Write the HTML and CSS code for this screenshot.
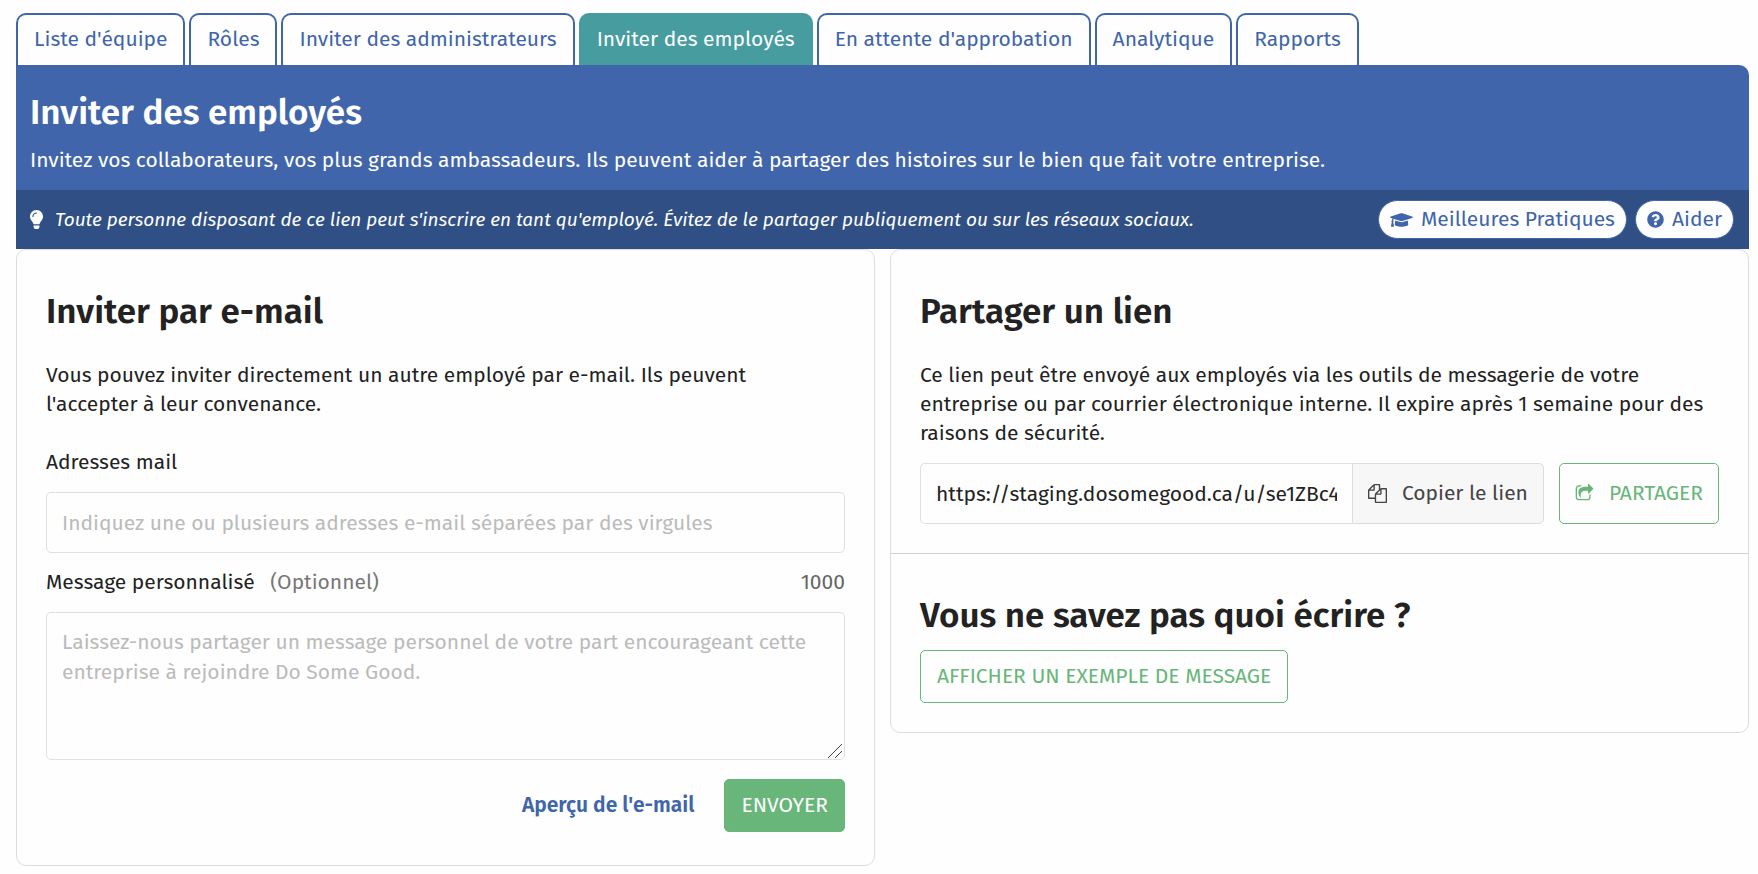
FILE: index.html
```html
<!DOCTYPE html>
<html lang="fr">
<head>
  <meta charset="UTF-8">
  <meta name="viewport" content="width=device-width, initial-scale=1">
  <title>Inviter des employés</title>
  <link rel="stylesheet" href="styles.css">
</head>
<body>

  <nav class="tabs">
    <a class="tab" href="#liste">Liste d'équipe</a>
    <a class="tab" href="#roles">Rôles</a>
    <a class="tab" href="#administrateurs">Inviter des administrateurs</a>
    <a class="tab is-active" href="#employes" aria-current="page">Inviter des employés</a>
    <a class="tab" href="#approbation">En attente d'approbation</a>
    <a class="tab" href="#analytique">Analytique</a>
    <a class="tab" href="#rapports">Rapports</a>
  </nav>

  <header class="page-header">
    <h1>Inviter des employés</h1>
    <p>Invitez vos collaborateurs, vos plus grands ambassadeurs. Ils peuvent aider à partager des histoires sur le bien que fait votre entreprise.</p>
  </header>

  <div class="tip-bar">
    <svg class="icon-bulb" viewBox="0 0 352 512" aria-hidden="true"><path d="M96.06 454.35c.01 6.29 1.87 12.45 5.36 17.69l17.09 25.69a31.99 31.99 0 0 0 26.64 14.28h61.71a31.99 31.99 0 0 0 26.64-14.28l17.09-25.69a31.989 31.989 0 0 0 5.36-17.69l.04-38.35H96.01l.05 38.35zM0 176c0 44.37 16.45 84.85 43.56 115.78 16.52 18.85 42.36 58.23 52.21 91.45.04.26.07.52.11.78h160.24c.04-.26.07-.51.11-.78 9.85-33.22 35.69-72.6 52.21-91.45C335.55 260.85 352 220.37 352 176 352 78.61 272.91-.3 175.45 0 73.44.31 0 82.97 0 176zm176-80c-44.11 0-80 35.89-80 80 0 8.84-7.16 16-16 16s-16-7.16-16-16c0-61.76 50.24-112 112-112 8.84 0 16 7.16 16 16s-7.16 16-16 16z"/></svg>
    <p class="tip">Toute personne disposant de ce lien peut s'inscrire en tant qu'employé. Évitez de le partager publiquement ou sur les réseaux sociaux.</p>
    <a class="pill" href="#pratiques">
      <svg class="icon-cap" viewBox="0 0 640 512" aria-hidden="true"><path d="M622.34 153.2L343.4 67.5c-15.2-4.67-31.6-4.67-46.79 0L17.66 153.2c-23.54 7.23-23.54 38.36 0 45.59l48.63 14.94c-10.67 13.19-17.23 29.28-17.88 46.9C38.78 266.15 32 276.11 32 288c0 10.78 5.68 19.85 13.86 25.65L20.33 428.53C18.11 438.52 25.71 448 35.94 448h56.11c10.24 0 17.84-9.48 15.62-19.47L82.14 313.65C90.32 307.85 96 298.78 96 288c0-11.57-6.47-21.25-15.66-26.87.76-15.02 8.44-28.3 20.69-36.72L296.6 284.5c9.06 2.78 26.44 6.25 46.79 0l278.95-85.7c23.55-7.24 23.55-38.36 0-45.6zM352.79 315.09c-28.53 8.76-52.84 3.92-65.59 0l-145.02-44.55L128 384c0 35.35 85.96 64 192 64s192-28.65 192-64l-14.18-113.47-145.03 44.56z"/></svg>
      Meilleures Pratiques
    </a>
    <a class="pill" href="#aide">
      <svg class="icon-help" viewBox="0 0 512 512" aria-hidden="true"><path d="M504 256c0 136.997-111.043 248-248 248S8 392.997 8 256C8 119.083 119.043 8 256 8s248 111.083 248 248zM262.655 90c-54.497 0-89.255 22.957-116.549 63.758-3.536 5.286-2.353 12.415 2.715 16.258l34.699 26.31c5.205 3.947 12.621 3.008 16.665-2.122 17.864-22.658 30.113-35.797 57.303-35.797 20.429 0 45.698 13.148 45.698 32.958 0 14.976-12.363 22.667-32.534 33.976C247.128 238.528 216 254.941 216 296v4c0 6.627 5.373 12 12 12h56c6.627 0 12-5.373 12-12v-1.333c0-28.462 83.186-29.647 83.186-106.667 0-58.002-60.165-102-116.531-102zM256 338c-25.365 0-46 20.635-46 46 0 25.364 20.635 46 46 46s46-20.636 46-46c0-25.365-20.635-46-46-46z"/></svg>
      Aider
    </a>
  </div>

  <main class="columns">

    <section class="card">
      <form class="card-section">
        <h2>Inviter par e-mail</h2>
        <p class="intro intro-email">Vous pouvez inviter directement un autre employé par e-mail. Ils peuvent l'accepter à leur convenance.</p>

        <label class="field-label" for="emails">Adresses mail</label>
        <input class="field" id="emails" type="text" placeholder="Indiquez une ou plusieurs adresses e-mail séparées par des virgules">

        <div class="label-row">
          <label for="message">Message personnalisé <span class="optional">(Optionnel)</span></label>
          <span class="counter">1000</span>
        </div>
        <div class="message-box">
          <textarea class="field" id="message" maxlength="1000" placeholder="Laissez-nous partager un message personnel de votre part encourageant cette entreprise à rejoindre Do Some Good."></textarea>
          <svg class="grip" viewBox="0 0 14 14" aria-hidden="true"><path d="M0 14L14 0M7 14L14 7"/></svg>
        </div>

        <div class="actions">
          <a class="preview" href="#apercu">Aperçu de l'e-mail</a>
          <button class="button is-primary" type="button">ENVOYER</button>
        </div>
      </form>
    </section>

    <section class="card">
      <div class="card-section">
        <h2>Partager un lien</h2>
        <p class="intro">Ce lien peut être envoyé aux employés via les outils de messagerie de votre entreprise ou par courrier électronique interne. Il expire après 1 semaine pour des raisons de sécurité.</p>
        <div class="share-row">
          <div class="link-group">
            <input class="field" type="text" aria-label="Lien d'invitation" value="https://staging.dosomegood.ca/u/se1ZBc4k" readonly>
            <button class="copy" type="button">
              <svg viewBox="0 0 1792 1792" aria-hidden="true"><path d="M1696 384q40 0 68 28t28 68v1216q0 40-28 68t-68 28h-960q-40 0-68-28t-28-68v-288h-544q-40 0-68-28t-28-68v-672q0-40 20-88t48-76l408-408q28-28 76-48t88-20h416q40 0 68 28t28 68v328q68-40 128-40h416zm-544 213l-299 299h299v-299zm-640-384l-299 299h299v-299zm196 647l316-316v-416h-384v416q0 40-28 68t-68 28h-416v640h512v-256q0-40 20-88t48-76zm956 804v-1152h-384v416q0 40-28 68t-68 28h-416v640h896z"/></svg>
              Copier le lien
            </button>
          </div>
          <button class="button is-share" type="button">
            <svg viewBox="0 0 1792 1792" aria-hidden="true"><path d="M1472 989v259q0 119-84.5 203.5t-203.5 84.5h-832q-119 0-203.5-84.5t-84.5-203.5v-832q0-119 84.5-203.5t203.5-84.5h255q13 0 22.5 9.5t9.5 22.5q0 27-26 32-77 26-133 60-10 4-16 4h-112q-66 0-113 47t-47 113v832q0 66 47 113t113 47h832q66 0 113-47t47-113v-214q0-19 18-29 28-13 54-37 16-16 35-8 21 9 21 29zm237-496l-384 384q-18 19-45 19-12 0-25-5-39-17-39-59v-192h-160q-323 0-438 131-119 137-74 473 3 23-20 34-8 2-12 2-16 0-26-13-10-14-21-31t-39.5-68.5-49.5-99.5-38.5-114-17.5-122q0-49 3.5-91t14-90 28-88 47-81.5 68.5-74 94.5-61.5 124.5-48.5 159.5-30.5 196.5-11h160v-192q0-42 39-59 13-5 25-5 26 0 45 19l384 384q19 19 19 45t-19 45z"/></svg>
            PARTAGER
          </button>
        </div>
      </div>
      <div class="card-section">
        <h2 class="is-tight">Vous ne savez pas quoi écrire ?</h2>
        <button class="button" type="button">AFFICHER UN EXEMPLE DE MESSAGE</button>
      </div>
    </section>

  </main>

</body>
</html>
```
FILE: styles.css
```css
* {
  box-sizing: border-box;
}
body {
  margin: 0;
  padding: 13px 9px 9px 16px;
  font-family: "Fira Sans", "Noto Sans", "Open Sans", sans-serif;
  font-size: 21px;
  line-height: 29px;
  color: #222;
  background: #fefefe;
}
h1, h2, p {
  margin: 0;
}
h1, h2 {
  font-size: 35px;
  font-weight: 600;
  line-height: 48px;
}
a {
  color: #4065ab;
  text-decoration: none;
}
input, textarea, button {
  font: inherit;
  color: inherit;
}
button {
  cursor: pointer;
}
svg {
  flex: none;
  fill: currentColor;
}

/* tabs */
.tabs {
  display: flex;
  gap: 4px;
}
.tab {
  height: 52px;
  padding: 10px 16px 0;
  border: 2px solid #4065ab;
  border-bottom: 0;
  border-radius: 10px 10px 0 0;
  white-space: nowrap;
}
.tab.is-active {
  border-color: #469c9f;
  color: #fff;
  background: #469c9f;
}

/* header */
.page-header {
  padding: 23px 14px 15px;
  border-radius: 0 10px 0 0;
  color: #fff;
  background: #4065ab;
}
.page-header p {
  margin-top: 10px;
}
.tip-bar {
  display: flex;
  align-items: center;
  gap: 8px;
  padding: 10px 15px 10px 14px;
  color: #fff;
  background: #304f84;
}
.tip {
  flex: 1;
  padding-left: 4px;
  font-size: 19px;
  font-style: italic;
}
.icon-bulb {
  width: 13px;
  height: 19px;
}
.pill {
  display: flex;
  align-items: center;
  gap: 8px;
  height: 39px;
  padding: 0 11px;
  border: 1px solid #4065ab;
  border-radius: 20px;
  white-space: nowrap;
  background: #fefefe;
}
.icon-cap {
  width: 23px;
  height: 18px;
}
.icon-help {
  width: 17px;
  height: 17px;
}

/* cards */
.columns {
  display: grid;
  grid-template-columns: 1fr 1fr;
  align-items: start;
  gap: 15px;
}
.card {
  min-width: 0;
  border: 1px solid #ddd;
  border-radius: 10px;
}
.card-section {
  padding: 37px 29px 29px;
}
.card-section + .card-section {
  border-top: 1px solid #d0d0d0;
}
.card h2 {
  margin-bottom: 26px;
}
.card h2.is-tight {
  margin-bottom: 11px;
}
.intro {
  margin-bottom: 15px;
}
.intro-email {
  margin-bottom: 29px;
  padding-right: 15px;
}

/* form */
.field {
  display: block;
  width: 100%;
  height: 61px;
  padding: 0 15px;
  border: 1px solid #e0e0e0;
  border-radius: 5px;
  background: #fefefe;
}
.field::placeholder {
  color: #bbb;
  opacity: 1;
}
.field-label {
  display: block;
  margin-bottom: 15px;
}
.label-row {
  display: flex;
  justify-content: space-between;
  margin: 15px 0;
}
.optional {
  margin-left: 10px;
  color: #777;
}
.counter {
  color: #666;
}
.message-box {
  position: relative;
}
textarea.field {
  height: 148px;
  padding: 14px 15px;
  line-height: 30px;
  resize: none;
}
.grip {
  position: absolute;
  right: 3px;
  bottom: 2px;
  width: 14px;
  height: 14px;
  stroke: #444;
}
.actions {
  display: flex;
  justify-content: flex-end;
  align-items: center;
  gap: 30px;
  margin: 19px 0 4px;
}
.preview {
  font-weight: 600;
}
.button {
  min-height: 53px;
  padding: 0 16px;
  border: 1px solid #68b67a;
  border-radius: 5px;
  color: #68b67a;
  background: #fefefe;
}
.button.is-primary {
  color: #fff;
  background: #68b67a;
}

/* link sharing */
.share-row {
  display: flex;
  gap: 15px;
}
.link-group {
  display: flex;
  flex: 1;
  min-width: 0;
}
.link-group .field {
  flex: 1;
  min-width: 0;
  border-right: 0;
  border-radius: 5px 0 0 5px;
}
.copy, .button.is-share {
  display: flex;
  align-items: center;
  gap: 15px;
  padding: 0 15px;
  white-space: nowrap;
}
.copy {
  border: 1px solid #ddd;
  border-radius: 0 5px 5px 0;
  color: #444;
  background: #f7f7f7;
}
.copy svg, .is-share svg {
  width: 19px;
  height: 19px;
}
```
